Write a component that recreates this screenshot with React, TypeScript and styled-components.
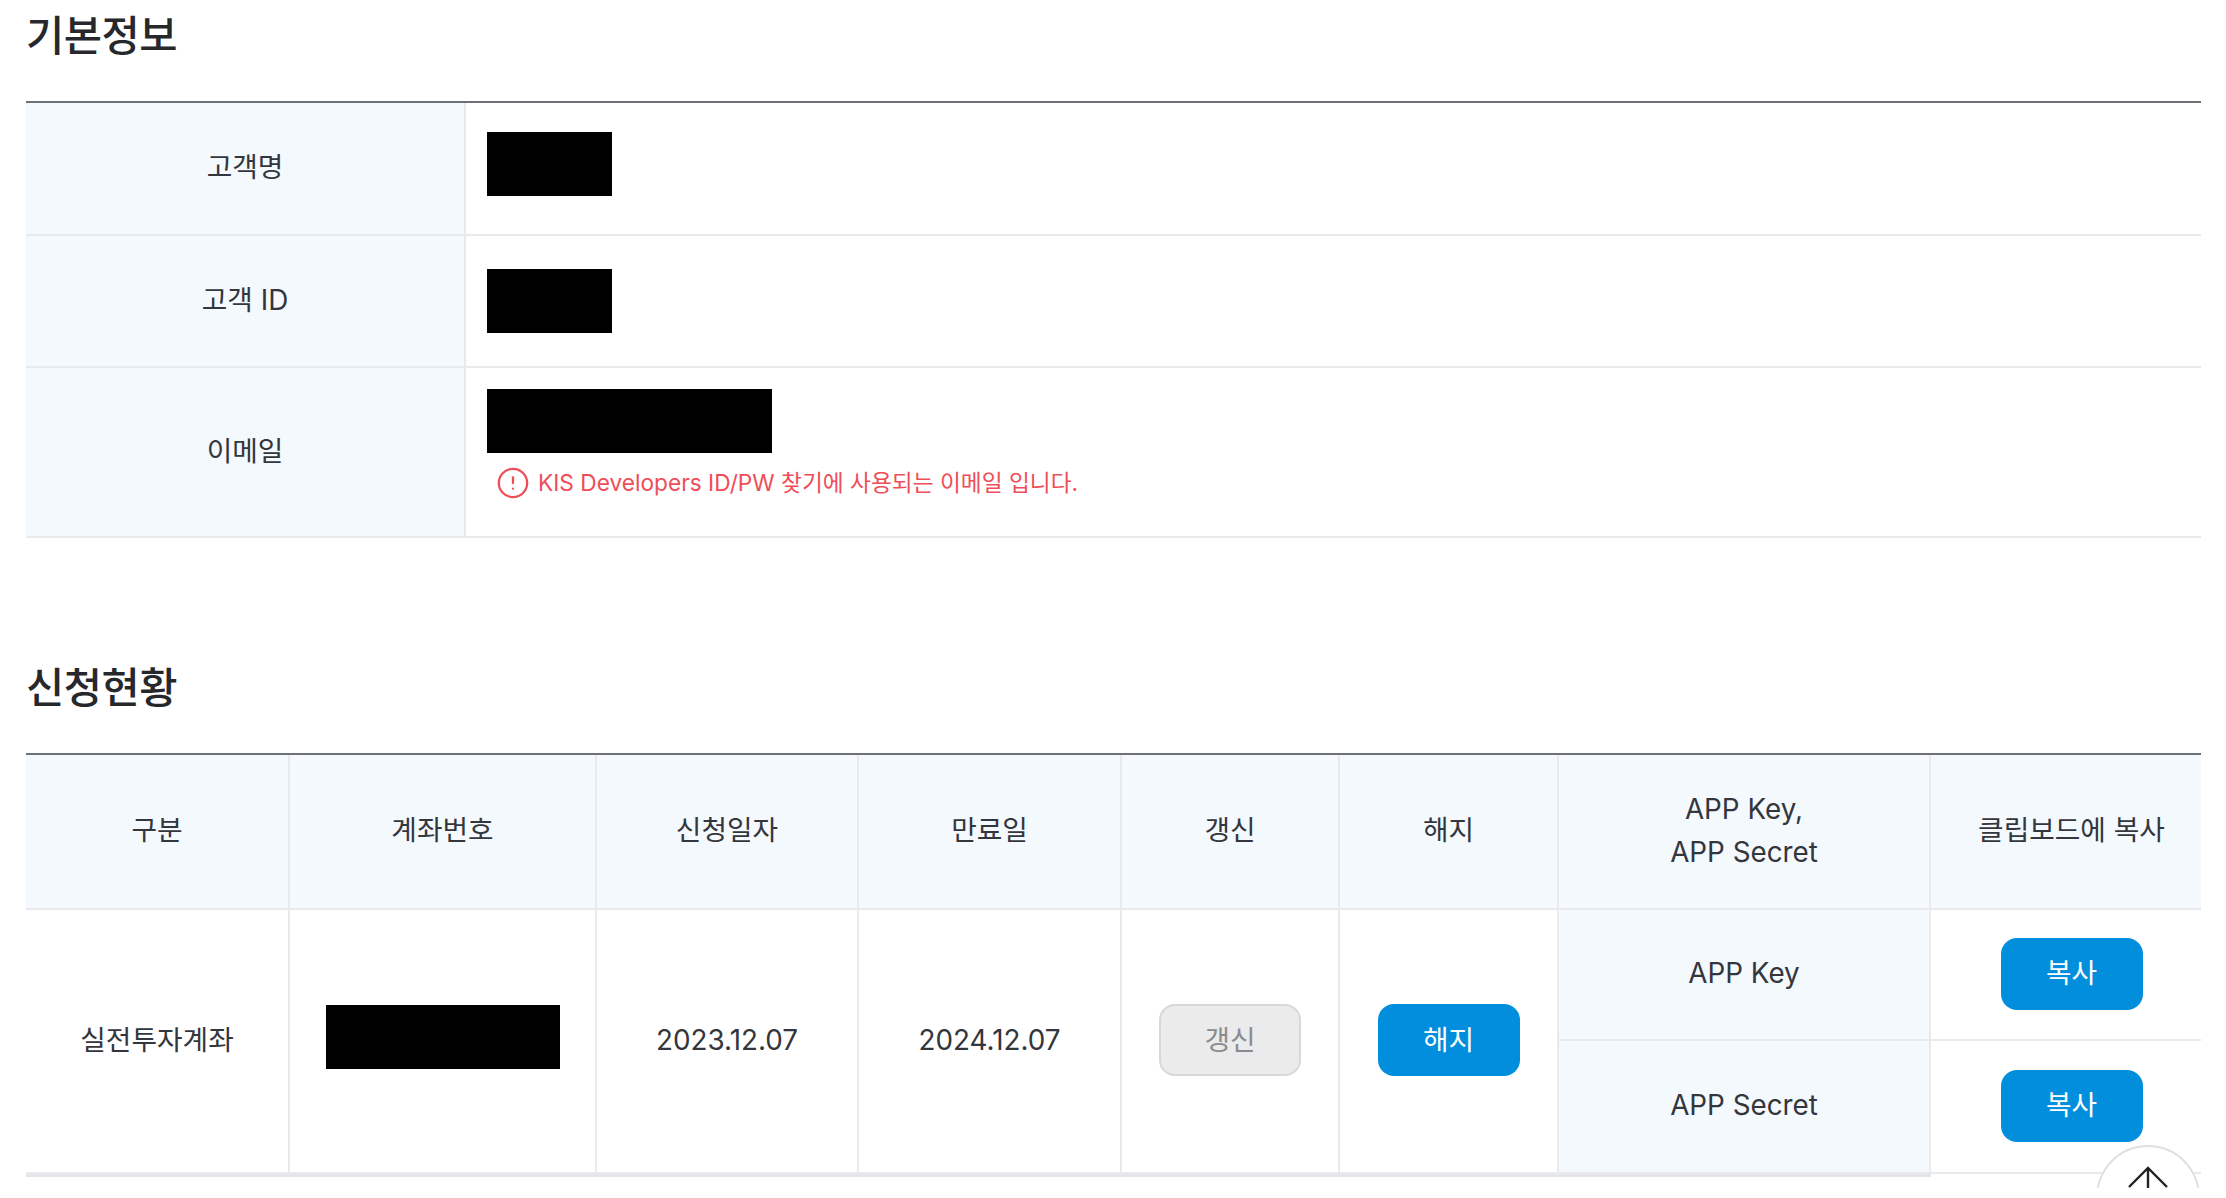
import React from 'react';
import styled, { createGlobalStyle } from 'styled-components';
import { CircleAlert } from 'lucide-react';

const GlobalStyle = createGlobalStyle`
  html, body {
    margin: 0;
    padding: 0;
    background: #fff;
  }
  body {
    font-family: Inter, 'Noto Sans CJK KR', sans-serif;
    font-size: 27.8px;
    color: #33363c;
  }
`;

const Page = styled.div`
  position: relative;
  height: 1188px;
  padding: 0 25px 0 26px;
  overflow: hidden;
`;

const Section = styled.section`
  overflow: hidden;
  padding-bottom: 4px;
  & + & {
    margin-top: 110px;
  }
`;

const Title = styled.h2`
  margin: 0 0 31px;
  height: 70px;
  font-size: 41.6px;
  font-weight: 500;
  line-height: 72px;
  letter-spacing: -0.5px;
  color: #26282c;
`;

const Table = styled.table<{ $overhang?: number }>`
  width: calc(100% + ${(p) => p.$overhang ?? 0}px);
  table-layout: fixed;
  border-collapse: separate;
  border-spacing: 0;
  border-top: 2px solid #6d7076;
`;

const Cell = styled.td<{ $head?: boolean; $thick?: boolean; $last?: boolean; $top?: number }>`
  padding: ${(p) => (p.$top != null ? `${p.$top}px 0 0 21px` : '0 0 2px')};
  text-align: ${(p) => (p.$top != null ? 'left' : 'center')};
  vertical-align: ${(p) => (p.$top != null ? 'top' : 'middle')};
  font-weight: 400;
  line-height: 43px;
  background: ${(p) => (p.$head ? '#f4f9fd' : '#fff')};
  border-bottom: 2px solid #e8eaee;
  border-right: ${(p) => (p.$last ? '0' : '2px solid #e8eaee')};
  box-shadow: ${(p) => (p.$thick ? '0 3px 0 #e4e5ea' : 'none')};
`;

const Redacted = styled.div<{ $w: number }>`
  width: ${(p) => p.$w}px;
  height: 64px;
  background: #000;
`;

const AccountRedacted = styled(Redacted)`
  margin: -6px auto 0;
`;

const Notice = styled.p`
  display: flex;
  align-items: center;
  gap: 8px;
  margin: 13px 0 0 9px;
  font-size: 22.7px;
  line-height: 30px;
  color: #ef4d58;
`;

const Button = styled.button<{ $disabled?: boolean }>`
  width: 142px;
  height: 72px;
  padding: 0;
  font: inherit;
  color: ${(p) => (p.$disabled ? '#8a8b8f' : '#fff')};
  background: ${(p) => (p.$disabled ? '#ebebec' : '#008edd')};
  border: ${(p) => (p.$disabled ? '2px solid #d8d8da' : '0')};
  border-radius: 16px;
  vertical-align: middle;
`;

const ScrollTop = styled.button`
  position: absolute;
  top: 1145px;
  left: 2096px;
  display: flex;
  align-items: flex-start;
  justify-content: center;
  width: 104px;
  height: 104px;
  padding: 18px 0 0;
  background: #fff;
  border: 2px solid #e0e0e0;
  border-radius: 50%;
`;

const App: React.FC = () => (
  <Page>
    <GlobalStyle />
    <Section>
      <Title>기본정보</Title>
      <Table>
        <colgroup>
          <col style={{ width: 440 }} />
          <col />
        </colgroup>
        <tbody>
          <tr style={{ height: 133 }}>
            <Cell as="th" $head>고객명</Cell>
            <Cell $last $top={29}><Redacted $w={125} /></Cell>
          </tr>
          <tr style={{ height: 132 }}>
            <Cell as="th" $head>고객 ID</Cell>
            <Cell $last $top={33}><Redacted $w={125} /></Cell>
          </tr>
          <tr style={{ height: 170 }}>
            <Cell as="th" $head>이메일</Cell>
            <Cell $last $top={21}>
              <Redacted $w={285} />
              <Notice>
                <CircleAlert size={34} strokeWidth={1.6} />
                KIS Developers ID/PW 찾기에 사용되는 이메일 입니다.
              </Notice>
            </Cell>
          </tr>
        </tbody>
      </Table>
    </Section>
    <Section>
      <Title>신청현황</Title>
      <Table $overhang={11}>
        <colgroup>
          <col style={{ width: 264 }} />
          <col style={{ width: 307 }} />
          <col style={{ width: 262 }} />
          <col style={{ width: 263 }} />
          <col style={{ width: 218 }} />
          <col style={{ width: 219 }} />
          <col style={{ width: 372 }} />
          <col />
        </colgroup>
        <thead>
          <tr style={{ height: 155 }}>
            <Cell as="th" $head>구분</Cell>
            <Cell as="th" $head>계좌번호</Cell>
            <Cell as="th" $head>신청일자</Cell>
            <Cell as="th" $head>만료일</Cell>
            <Cell as="th" $head>갱신</Cell>
            <Cell as="th" $head>해지</Cell>
            <Cell as="th" $head>APP Key,<br />APP Secret</Cell>
            <Cell as="th" $head $last>클립보드에 복사</Cell>
          </tr>
        </thead>
        <tbody>
          <tr style={{ height: 131 }}>
            <Cell rowSpan={2} $thick>실전투자계좌</Cell>
            <Cell rowSpan={2} $thick><AccountRedacted $w={234} /></Cell>
            <Cell rowSpan={2} $thick>2023.12.07</Cell>
            <Cell rowSpan={2} $thick>2024.12.07</Cell>
            <Cell rowSpan={2} $thick><Button $disabled>갱신</Button></Cell>
            <Cell rowSpan={2} $thick><Button>해지</Button></Cell>
            <Cell $head>APP Key</Cell>
            <Cell $last><Button>복사</Button></Cell>
          </tr>
          <tr style={{ height: 133 }}>
            <Cell $head $thick>APP Secret</Cell>
            <Cell $last><Button>복사</Button></Cell>
          </tr>
        </tbody>
      </Table>
    </Section>
    <ScrollTop aria-label="맨 위로">
      <svg width="42" height="24" viewBox="0 0 42 24" fill="none" stroke="#222" strokeWidth="2.4">
        <path d="M2 22 21 3l19 19M21 3v21" />
      </svg>
    </ScrollTop>
  </Page>
);

export default App;
